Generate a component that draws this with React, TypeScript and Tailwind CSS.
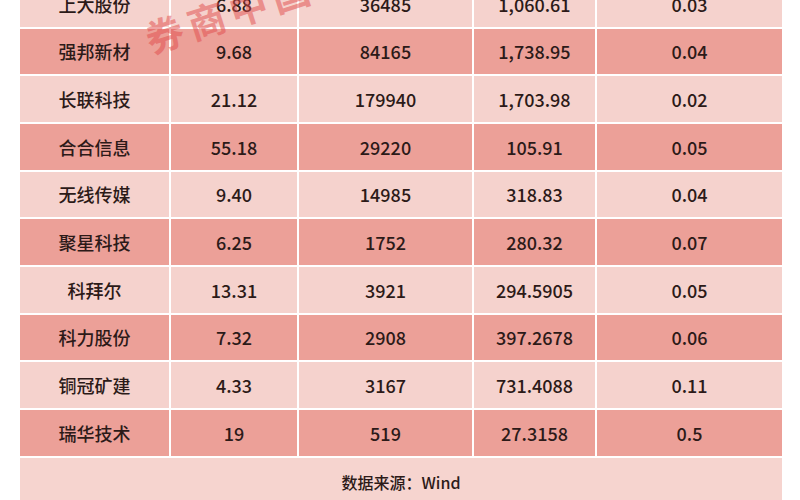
const rows: [string, string, string, string, string][] = [
  ["上大股份", "6.88", "36485", "1,060.61", "0.03"],
  ["强邦新材", "9.68", "84165", "1,738.95", "0.04"],
  ["长联科技", "21.12", "179940", "1,703.98", "0.02"],
  ["合合信息", "55.18", "29220", "105.91", "0.05"],
  ["无线传媒", "9.40", "14985", "318.83", "0.04"],
  ["聚星科技", "6.25", "1752", "280.32", "0.07"],
  ["科拜尔", "13.31", "3921", "294.5905", "0.05"],
  ["科力股份", "7.32", "2908", "397.2678", "0.06"],
  ["铜冠矿建", "4.33", "3167", "731.4088", "0.11"],
  ["瑞华技术", "19", "519", "27.3158", "0.5"],
];

export default function App() {
  return (
    <div
      className="relative h-[500px] w-[800px] overflow-hidden bg-white"
      style={{ fontFamily: '"Noto Sans CJK SC", "Noto Sans", sans-serif' }}
    >
      <div className="ml-[20px] -mt-[19px] flex w-[762px] flex-col gap-[2px] text-[18px] font-medium text-[#2c1a18]">
        {rows.map((row, i) => (
          <div
            key={row[0]}
            className={
              "grid grid-cols-[149px_126px_173px_121px_185px] gap-[2px] " +
              (i % 3 === 1 ? "h-[45px]" : "h-[46px]")
            }
          >
            {row.map((cell, j) => (
              <div
                key={j}
                className={
                  "flex items-center justify-center " +
                  (i % 2 === 1 ? "bg-[#eca098]" : "bg-[#f5d2cd]")
                }
              >
                {cell}
              </div>
            ))}
          </div>
        ))}
        <div className="flex h-[60px] items-start justify-center bg-[#f6d4cf] pt-[12px] text-[16px]">
          数据来源：Wind
        </div>
      </div>

      <div className="pointer-events-none absolute left-[146px] top-[10px] origin-left -rotate-[18deg] text-[38px] font-bold tracking-[6px] text-[#e04a4a]/50">
        券商中国
      </div>
    </div>
  );
}
